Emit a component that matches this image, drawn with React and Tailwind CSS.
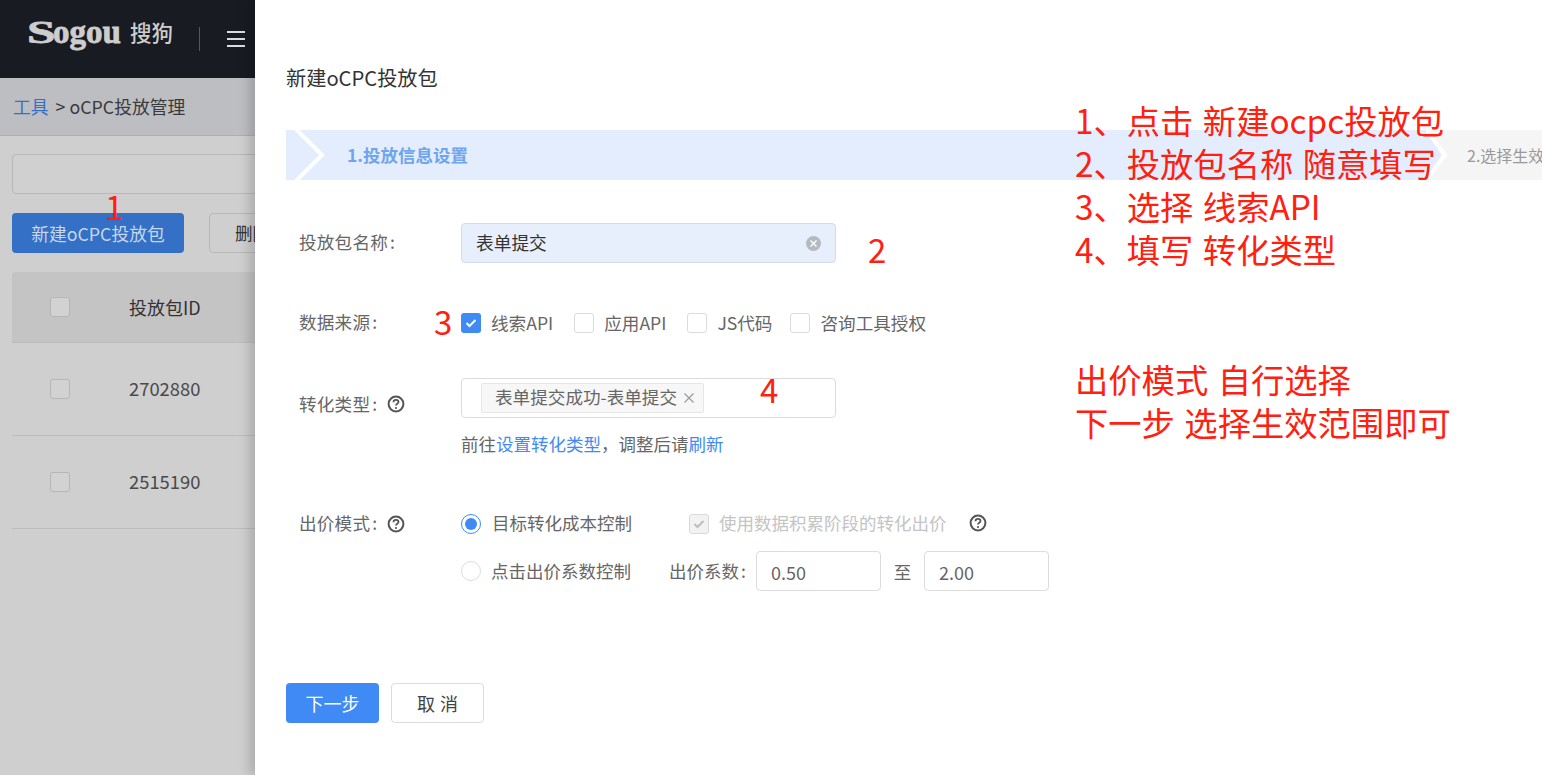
import React from "react";

const font = "font-['Noto_Sans_CJK_SC','Noto_Sans',sans-serif]";

function Help() {
  return (
    <svg width="18" height="18" viewBox="0 0 18 18" className="shrink-0">
      <circle cx="9" cy="9" r="7.4" fill="none" stroke="#555" strokeWidth="2" />
      <path d="M6.5 7.2c0-1.5 1.1-2.3 2.5-2.3s2.5.8 2.5 2.1c0 1.9-2.5 1.8-2.5 3.6" fill="none" stroke="#555" strokeWidth="1.8" />
      <circle cx="9" cy="13" r="1.1" fill="#555" />
    </svg>
  );
}

function Check({ on, disabled, dark }) {
  if (on) {
    return (
      <span className={`w-5 h-5 rounded-[3px] flex items-center justify-center shrink-0 ${disabled ? "bg-[#f2f2f2] border border-[#d9d9d9]" : "bg-[#3f8af5]"}`}>
        <svg width="14" height="14" viewBox="0 0 14 14">
          <path d="M2.5 7l3 3 6-6" fill="none" stroke={disabled ? "#bdbdbd" : "#fff"} strokeWidth="2" />
        </svg>
      </span>
    );
  }
  return <span className={`block w-5 h-5 rounded-[3px] border shrink-0 ${dark ? "border-[#b6b6b6] bg-[#d2d2d2]" : "border-[#dcdcdc] bg-white"}`} />;
}

function Row({ id }) {
  return (
    <div className="h-[93px] border-b border-[#bcbcbc] flex items-center">
      <div className="w-[117px] pl-[38px]"><Check dark /></div>
      <span className="text-[18.4px] text-[#4a4a4a]">{id}</span>
    </div>
  );
}

function Label({ children, help }) {
  return (
    <div className="w-[162px] shrink-0 flex items-center gap-[10px] text-[17.6px] text-[#666] -mt-[1px]">
      <span className="tracking-[0.2px]">{children}<span className="ml-[2px]">:</span></span>
      {help && <Help />}
    </div>
  );
}

function Opt({ label, on, className = "" }) {
  return (
    <div className={`flex items-center gap-[10px] text-[17.6px] text-[#666] ${className}`}>
      <Check on={on} />
      <span>{label}</span>
    </div>
  );
}

function Ann({ className, children }) {
  return <div className={`absolute text-[#ff2010] leading-none whitespace-nowrap [word-spacing:2px] ${className}`}>{children}</div>;
}

export default function App() {
  return (
    <div className={`${font} relative flex w-[1542px] h-[775px] overflow-hidden bg-white`}>
      <div className="w-[255px] shrink-0 overflow-hidden bg-[#cfcfcf]">
        <div className="w-[700px]">
          <div className="h-[78px] bg-[#181b22] flex items-center pl-[27px]">
            <div className="w-[172px] flex items-center text-[#cdcdcd]">
              <span className="font-['Liberation_Serif',serif] font-bold leading-none w-[103px] -mt-[14px] flex items-baseline [-webkit-text-stroke:0.8px_#cdcdcd]">
                <span className="inline-block text-[32px] w-[26px] scale-x-[1.6] origin-left">S</span>
                <span className="text-[33px]">ogou</span>
              </span>
              <span className="text-[21.5px] leading-none -mt-[14px] font-medium">搜狗</span>
            </div>
            <span className="w-px h-[24px] bg-[#555a60]" />
            <div className="ml-[27px] w-[18px] flex flex-col gap-[5px]">
              <span className="h-[2px] bg-[#d8dde0]" />
              <span className="h-[2px] bg-[#d8dde0]" />
              <span className="h-[2px] bg-[#d8dde0]" />
            </div>
          </div>
          <div className="h-[58px] bg-[#bdbec2] border-b border-[#aeaeb0] flex items-center pl-[13px] text-[17.8px] text-[#3a3a3c]">
            <span className="text-[#3470c4]">工具</span>
            <span className="ml-[7px]">&gt; oCPC投放管理</span>
          </div>
          <div className="pl-[12px] pt-[18px]">
            <div className="h-[40px] rounded-[4px] border border-[#b8b8b8] bg-[#d0d0d0]" />
            <div className="mt-[19px] flex gap-[25px]">
              <div className="w-[172px] h-[40px] rounded-[4px] bg-[#3370c6] text-[#c8d6ea] text-[17.8px] flex items-center justify-center">新建oCPC投放包</div>
              <div className="w-[90px] h-[40px] rounded-[4px] border border-[#b8b8b8] text-[#333] text-[17.6px] flex items-center pl-[25px]">删除</div>
            </div>
            <div className="mt-[19px]">
              <div className="h-[71px] bg-[#c4c4c4] rounded-t-[4px] border-b border-[#bcbcbc] flex items-center">
                <div className="w-[117px] pl-[38px]"><Check dark /></div>
                <span className="text-[18px] text-[#333]">投放包ID</span>
              </div>
              <Row id="2702880" />
              <Row id="2515190" />
            </div>
          </div>
        </div>
      </div>

      <div className="relative flex-1 min-w-0 bg-white pl-[31px] pt-[64px] shadow-[-6px_0_10px_rgba(0,0,0,0.16)]">
        <div className="h-[28px] flex items-center text-[20.2px] text-[#333]">新建oCPC投放包</div>

        <div className="mt-[38px] h-[50px] flex overflow-hidden">
          <div className="relative w-[1140px] shrink-0 bg-[#e3edfe] flex items-center pl-[61px] text-[17.5px] font-bold text-[#6ea5ee]">
            <svg width="40" height="50" viewBox="0 0 40 50" className="absolute left-0 top-0">
              <path d="M10 -1 L36 25 L10 51" fill="none" stroke="#fff" strokeWidth="4" />
            </svg>
            1.投放信息设置
          </div>
          <div className="relative flex-1 bg-[#f5f5f5] flex items-center pl-[41px] text-[16px] text-[#999] whitespace-nowrap overflow-hidden">
            <svg width="24" height="50" viewBox="0 0 24 50" className="absolute left-0 top-0">
              <path d="M0 0 L15 25 L0 50 Z" fill="#e3edfe" />
              <path d="M-1 -2 L19 25 L-1 52" fill="none" stroke="#fff" strokeWidth="4" />
            </svg>
            2.选择生效范围
          </div>
        </div>

        <div className="pl-[13px]">
          <div className="mt-[43px] h-[40px] flex items-center">
            <Label>投放包名称</Label>
            <div className="w-[375px] h-[40px] rounded-[4px] border border-[#d5dbe6] bg-[#e8effc] flex items-center justify-between pl-[14px] pr-[14px] text-[17.7px] text-[#333]">
              <span className="-mt-[1px]">表单提交</span>
              <span className="w-[15px] h-[15px] rounded-full bg-[#b4b9c2] flex items-center justify-center">
                <svg width="9" height="9" viewBox="0 0 9 9"><path d="M1.5 1.5l6 6M7.5 1.5l-6 6" stroke="#fff" strokeWidth="1.4" /></svg>
              </span>
            </div>
          </div>

          <div className="mt-[40px] h-[40px] flex items-center">
            <Label>数据来源</Label>
            <div className="flex items-center gap-[21px]">
              <Opt label="线索API" on />
              <Opt label="应用API" />
              <Opt label="JS代码" />
              <Opt label="咨询工具授权" className="-ml-[3px]" />
            </div>
          </div>

          <div className="mt-[35px] h-[40px] flex items-start">
            <div className="pt-[14px] flex"><Label help>转化类型</Label></div>
            <div className="w-[375px] h-[40px] rounded-[4px] border border-[#dcdcdc] flex items-center pl-[19px]">
              <div className="h-[30px] rounded-[2px] border border-[#e6e6e6] bg-[#f7f7f7] flex items-center pl-[13px] pr-[8px] gap-[6px] text-[17.6px] text-[#666]">
                <span className="-mt-[1px]">表单提交成功-表单提交</span>
                <svg width="12" height="12" viewBox="0 0 12 12"><path d="M1.5 1.5l9 9M10.5 1.5l-9 9" stroke="#999" strokeWidth="1.1" /></svg>
              </div>
            </div>
          </div>

          <div className="mt-[13px] h-[26px] pl-[162px] flex items-center text-[17.5px] text-[#666]">
            前往<span className="text-[#3f8af5]">设置转化类型</span>，调整后请<span className="text-[#3f8af5]">刷新</span>
          </div>

          <div className="mt-[55px] h-[24px] flex items-center">
            <Label help>出价模式</Label>
            <div className="w-[228px] flex items-center gap-[11px] text-[17.5px] text-[#666]">
              <span className="w-5 h-5 rounded-full border border-[#3f8af5] flex items-center justify-center">
                <span className="w-[12px] h-[12px] rounded-full bg-[#3f8af5]" />
              </span>
              <span className="-mt-[1px]">目标转化成本控制</span>
            </div>
            <div className="flex items-center gap-[10px] text-[17.5px] text-[#c4c4c4]">
              <Check on disabled />
              <span className="-mt-[1px]">使用数据积累阶段的转化出价</span>
              <span className="ml-[12px] -mt-[2px]"><Help /></span>
            </div>
          </div>

          <div className="mt-[15px] h-[40px] flex items-center">
            <div className="w-[162px] shrink-0" />
            <div className="w-[208px] flex items-center gap-[10px] text-[17.5px] text-[#666]">
              <span className="w-5 h-5 rounded-full border border-[#dcdcdc]" />
              点击出价系数控制
            </div>
            <span className="w-[87px] text-[17.5px] text-[#666] whitespace-nowrap">出价系数<span className="ml-[2px]">:</span></span>
            <div className="w-[125px] h-[40px] rounded-[4px] border border-[#dcdcdc] flex items-center pl-[14px] text-[18px] text-[#666] pt-[2px]">0.50</div>
            <span className="w-[43px] text-center text-[17.5px] text-[#666] pt-[2px]">至</span>
            <div className="w-[125px] h-[40px] rounded-[4px] border border-[#dcdcdc] flex items-center pl-[14px] text-[18px] text-[#666] pt-[2px]">2.00</div>
          </div>
        </div>

        <div className="mt-[92px] flex gap-[12px]">
          <div className="w-[93px] h-[40px] rounded-[4px] bg-[#3f8af5] text-white text-[18px] flex items-center justify-center">下一步</div>
          <div className="w-[93px] h-[40px] rounded-[4px] border border-[#dcdcdc] text-[#444] text-[18px] flex items-center justify-center tracking-[5px] pl-[5px]">取消</div>
        </div>
      </div>

      <Ann className="left-[105px] top-[190px] text-[33px]">1</Ann>
      <Ann className="left-[868px] top-[233px] text-[33px]">2</Ann>
      <Ann className="left-[434px] top-[305px] text-[33px]">3</Ann>
      <Ann className="left-[760px] top-[373px] text-[33px]">4</Ann>
      <Ann className="left-[1075px] top-[103px] text-[33.3px]">1、点击 新建ocpc投放包</Ann>
      <Ann className="left-[1075px] top-[146px] text-[33.3px]">2、投放包名称 随意填写</Ann>
      <Ann className="left-[1075px] top-[189px] text-[33.3px]">3、选择 线索API</Ann>
      <Ann className="left-[1075px] top-[232px] text-[33.3px]">4、填写 转化类型</Ann>
      <Ann className="left-[1075px] top-[362px] text-[33.3px]">出价模式 自行选择</Ann>
      <Ann className="left-[1075px] top-[405px] text-[33.3px]">下一步 选择生效范围即可</Ann>
    </div>
  );
}
